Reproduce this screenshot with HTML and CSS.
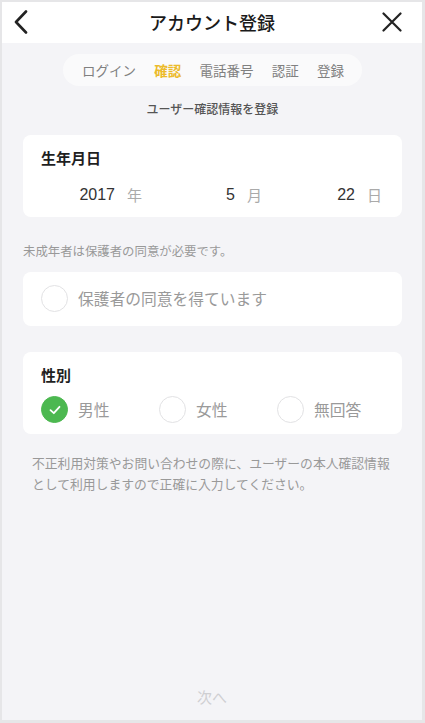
FILE: index.html
```html
<!DOCTYPE html>
<html lang="ja">
<head>
    <meta charset="UTF-8">
    <meta name="viewport" content="width=device-width, initial-scale=1.0">
    <title>アカウント登録</title>
    <link rel="stylesheet" href="styles.css">
</head>
<body>
    <div class="screen">
        <header class="nav-bar">
            <button class="nav-btn" aria-label="戻る">
                <svg width="14" height="24" viewBox="0 0 14 24"><path d="M12 1.5 L2 12 L12 22.5" fill="none" stroke="#222" stroke-width="2.6" stroke-linecap="round" stroke-linejoin="round"/></svg>
            </button>
            <h1 class="nav-title">アカウント登録</h1>
            <button class="nav-btn" aria-label="閉じる">
                <svg width="20" height="20" viewBox="0 0 20 20"><path d="M1.5 1.5 L18.5 18.5 M18.5 1.5 L1.5 18.5" fill="none" stroke="#222" stroke-width="2.2" stroke-linecap="round"/></svg>
            </button>
        </header>

        <main class="content">
            <nav class="steps">
                <span class="step">ログイン</span>
                <span class="step active">確認</span>
                <span class="step">電話番号</span>
                <span class="step">認証</span>
                <span class="step">登録</span>
            </nav>

            <p class="subtitle">ユーザー確認情報を登録</p>

            <section class="card">
                <h2 class="card-title">生年月日</h2>
                <div class="date-row">
                    <div class="date-item"><span class="num">2017</span><span class="unit">年</span></div>
                    <div class="date-item"><span class="num">5</span><span class="unit">月</span></div>
                    <div class="date-item"><span class="num">22</span><span class="unit">日</span></div>
                </div>
            </section>

            <p class="note">未成年者は保護者の同意が必要です。</p>

            <section class="card card-single">
                <label class="option">
                    <span class="radio"></span>
                    <span class="option-label">保護者の同意を得ています</span>
                </label>
            </section>

            <section class="card card-gender">
                <h2 class="card-title">性別</h2>
                <div class="gender-row">
                    <label class="option">
                        <span class="radio checked">
                            <svg width="14" height="14" viewBox="0 0 14 14"><path d="M2.5 7.2 L5.8 10.2 L11.5 3.8" fill="none" stroke="#fff" stroke-width="1.8" stroke-linecap="round" stroke-linejoin="round"/></svg>
                        </span>
                        <span class="option-label">男性</span>
                    </label>
                    <label class="option">
                        <span class="radio"></span>
                        <span class="option-label">女性</span>
                    </label>
                    <label class="option">
                        <span class="radio"></span>
                        <span class="option-label">無回答</span>
                    </label>
                </div>
            </section>

            <p class="footnote">不正利用対策やお問い合わせの際に、ユーザーの本人確認情報として利用しますので正確に入力してください。</p>
        </main>

        <footer class="bottom">
            <button class="next-btn" disabled>次へ</button>
        </footer>
    </div>
</body>
</html>
```

FILE: styles.css
```css
* {
    box-sizing: border-box;
}

body {
    margin: 0;
    background: #e6e6e8;
    font-family: "Noto Sans CJK JP", sans-serif;
    color: #222;
}

.screen {
    height: 723px;
    border-style: solid;
    border-color: #e6e6e8;
    border-width: 2px 3px 3px 2px;
    background: #f4f4f7;
    display: flex;
    flex-direction: column;
}

/* header */
.nav-bar {
    height: 41px;
    background: #fff;
    display: flex;
    align-items: center;
    justify-content: space-between;
    padding: 0 12px 2px 12px;
}

.nav-btn {
    border: none;
    background: none;
    padding: 0;
    width: 30px;
    height: 30px;
    display: flex;
    align-items: center;
    justify-content: flex-start;
}

.nav-btn:last-child {
    justify-content: flex-end;
    padding-right: 8px;
}

.nav-title {
    margin: 0;
    font-size: 18px;
    font-weight: 500;
    line-height: 24px;
    color: #1a1a1a;
}

/* content */
.content {
    flex: 1;
    padding: 0 20px 0 21px;
}

.steps {
    width: 299px;
    height: 32px;
    margin: 11px auto 0;
    padding: 0 18px 0 19px;
    border-radius: 16px;
    background: #fafafb;
    display: flex;
    align-items: center;
    justify-content: space-between;
}

.step {
    font-size: 13.5px;
    color: #808080;
    line-height: 20px;
}

.step.active {
    color: #ecbb2a;
    font-weight: 700;
}

.subtitle {
    margin: 14px 0 0;
    text-align: center;
    font-size: 12px;
    line-height: 18px;
    font-weight: 500;
    color: #555;
}

.card {
    background: #fff;
    border-radius: 8px;
    padding: 12px 20px 10px 18px;
}

.subtitle + .card {
    margin-top: 17px;
}

.card-title {
    margin: 0;
    font-size: 15px;
    line-height: 22px;
    font-weight: 700;
    color: #1f1f1f;
}

.date-row {
    margin-top: 14px;
    display: grid;
    grid-template-columns: repeat(3, 120px);
    justify-content: end;
}

.date-item {
    height: 24px;
    display: flex;
    align-items: center;
    justify-content: flex-end;
}

.num {
    font-family: "Liberation Sans", sans-serif;
    font-size: 16px;
    line-height: 24px;
    color: #333;
}

.unit {
    font-size: 15px;
    line-height: 24px;
    color: #aaa;
    margin-left: 12px;
}

.note {
    margin: 25px 0 0;
    font-size: 12.4px;
    line-height: 18px;
    color: #999;
}

.card-single {
    margin-top: 12px;
    padding: 13px 18px 14px;
}

.option {
    display: flex;
    align-items: center;
}

.radio {
    width: 27px;
    height: 27px;
    border-radius: 50%;
    border: 1px solid #e2e2e4;
    display: flex;
    align-items: center;
    justify-content: center;
    flex-shrink: 0;
}

.radio.checked {
    background: #4cb850;
    border-color: #4cb850;
}

.option-label {
    margin-left: 10px;
    font-size: 15.75px;
    color: #9a9a9a;
    line-height: 24px;
}

.card-gender {
    margin-top: 26px;
    padding: 12px 18px 11px;
}

.gender-row {
    margin-top: 10px;
    display: grid;
    grid-template-columns: repeat(3, 118px);
}

.footnote {
    margin: 18px 0 0;
    padding: 0 9px;
    font-size: 12.8px;
    line-height: 21px;
    color: #999;
}

/* bottom */
.bottom {
    padding-bottom: 13px;
    display: flex;
    justify-content: center;
}

.next-btn {
    border: none;
    background: none;
    font-family: inherit;
    font-size: 15px;
    line-height: 20px;
    color: #cfcfd2;
    padding: 0;
}
```
